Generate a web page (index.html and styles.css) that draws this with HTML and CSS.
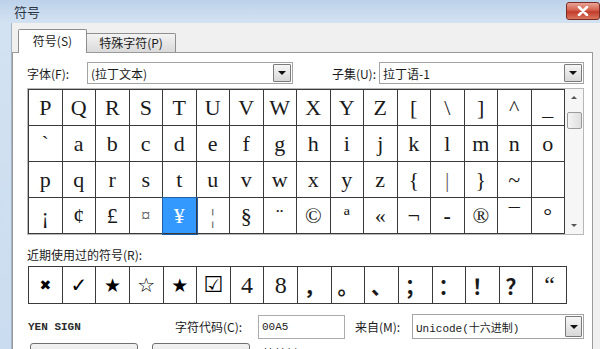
FILE: index.html
```html
<!DOCTYPE html>
<html>
<head>
<meta charset="utf-8">
<link rel="stylesheet" href="styles.css">
</head>
<body>
<div class="window">
  <div class="titlebar">
    <span class="title">符号</span>
    <span class="close"><svg width="12" height="10" viewBox="0 0 12 10"><path d="M2 1 L10 9 M10 1 L2 9" stroke="#fff" stroke-width="2.6" stroke-linecap="round"/></svg></span>
  </div>
  <div class="body">
    <div class="tabs">
      <div class="tab active">符号(S)</div>
      <div class="tab">特殊字符(P)</div>
    </div>
    <div class="panel">
      <div class="select-row">
        <span class="lbl lbl-font">字体(F):</span>
        <div class="select sel-font"><span>(拉丁文本)</span><span class="dd"><i class="tri"></i></span></div>
        <span class="lbl lbl-subset">子集(U):</span>
        <div class="select sel-subset"><span>拉丁语-1</span><span class="dd"><i class="tri"></i></span></div>
      </div>
      <div class="grid-wrap">
        <div class="grid">
          <span>P</span><span>Q</span><span>R</span><span>S</span><span>T</span><span>U</span><span>V</span><span>W</span><span>X</span><span>Y</span><span>Z</span><span>[</span><span>\</span><span>]</span><span>^</span><span>_</span>
          <span>`</span><span>a</span><span>b</span><span>c</span><span>d</span><span>e</span><span>f</span><span>g</span><span>h</span><span>i</span><span>j</span><span>k</span><span>l</span><span>m</span><span>n</span><span>o</span>
          <span>p</span><span>q</span><span>r</span><span>s</span><span>t</span><span>u</span><span>v</span><span>w</span><span>x</span><span>y</span><span>z</span><span>{</span><span class="gray">|</span><span>}</span><span>~</span><span></span>
          <span>¡</span><span>¢</span><span>£</span><span class="small">¤</span><span class="sel">¥</span><span class="gray">¦</span><span>§</span><span>¨</span><span>©</span><span>ª</span><span>«</span><span>¬</span><span class="bold">-</span><span>®</span><span>¯</span><span>°</span>
        </div>
        <div class="scrollbar">
          <div class="sb-btn"><i class="tri-up"></i></div>
          <div class="sb-track"><div class="thumb"></div></div>
          <div class="sb-btn"><i class="tri-down"></i></div>
        </div>
      </div>
      <div class="recent-label">近期使用过的符号(R):</div>
      <div class="recent">
        <span class="sym x">✖</span><span class="sym check">✓</span><span class="sym star">★</span><span class="sym star thin">☆</span><span class="sym star">★</span><span class="sym box">☑</span><span>4</span><span>8</span>
        <span class="cjk">，</span><span class="cjk">。</span><span class="cjk">、</span><span class="cjk">；</span><span class="cjk">：</span><span class="cjk">！</span><span class="cjk">？</span><span class="cjk quote">“</span>
      </div>
      <div class="info-row">
        <span class="name">YEN SIGN</span>
        <span class="lbl lbl-code">字符代码(C):</span>
        <div class="input">00A5</div>
        <span class="lbl lbl-from">来自(M):</span>
        <div class="select sel-from"><span class="mono">Unicode(十六进制)</span><span class="dd"><i class="tri"></i></span></div>
      </div>
      <div class="btn-row">
        <div class="btn btn1">自动更正(A)...</div>
        <div class="btn btn2">快捷键(K)...</div>
        <span class="lbl shortcut">快捷键: Alt+0165</span>
      </div>
    </div>
  </div>
</div>
</body>
</html>
```
FILE: styles.css
```css
* { box-sizing: border-box; }
html, body { margin: 0; padding: 0; }
body {
  width: 600px;
  height: 349px;
  overflow: hidden;
  font-family: "Noto Sans CJK SC", sans-serif;
  font-size: 12px;
  color: #1b1b1b;
}
.window {
  width: 600px;
  height: 349px;
  display: flex;
  flex-direction: column;
  overflow: hidden;
  background: linear-gradient(to bottom, #bcd2ea 0, #d3e2f2 23px, #cadcef 100%);
}
.titlebar {
  height: 23px;
  flex: none;
  display: flex;
  align-items: flex-start;
  justify-content: space-between;
  padding-left: 14px;
}
.title {
  font-size: 13px;
  line-height: 23px;
  color: #2a3442;
}
.close {
  width: 34px;
  height: 18px;
  margin-top: 2px;
  border: 1px solid #7a2c23;
  border-radius: 3px;
  background: linear-gradient(to bottom, #e9a596 0, #d4604c 45%, #c23c2c 55%, #d9765e 100%);
  display: flex;
  align-items: center;
  justify-content: center;
}
.body {
  flex: 1;
  margin-left: 11px;
  border-left: 1px solid #a3b4c6;
  background: #f0f0f0;
  padding: 6px 7px 0 0;
  display: flex;
  flex-direction: column;
}
.tabs {
  display: flex;
  align-items: flex-end;
  padding-left: 6px;
  height: 23px;
  flex: none;
}
.tab {
  height: 19px;
  width: 89px;
  border: 1px solid #8e8e8e;
  border-bottom: none;
  border-left: none;
  background: linear-gradient(to bottom, #f3f3f3, #dadada);
  line-height: 17px;
  text-align: center;
  border-radius: 0 2px 0 0;
}
.tab.active {
  width: 69px;
  height: 24px;
  margin-bottom: -1px;
  border-left: 1px solid #8e8e8e;
  background: #fff;
  position: relative;
  z-index: 1;
  line-height: 22px;
  border-radius: 2px 2px 0 0;
}
.panel {
  flex: 1;
  background: #fff;
  border: 1px solid #9a9a9a;
  padding: 9px 8px 0 14px;
}
.select-row {
  display: flex;
  align-items: center;
  height: 22px;
}
.lbl { white-space: nowrap; }
.lbl-font { width: 60px; }
.lbl-subset { width: 86px; text-align: right; padding-right: 3px; }
.select {
  height: 22px;
  border: 1px solid #a4a4a4;
  background: #fff;
  display: flex;
  align-items: center;
  justify-content: space-between;
  padding-left: 3px;
  padding-right: 1px;
}
.sel-font { width: 206px; }
.sel-subset { width: 205px; }
.dd {
  width: 18px;
  height: 18px;
  border: 1px solid #7b7b7b;
  border-radius: 1px;
  background: linear-gradient(to bottom, #f6f6f6, #d8d8d8);
  display: flex;
  align-items: center;
  justify-content: center;
}
.tri {
  width: 0;
  height: 0;
  border-left: 4px solid transparent;
  border-right: 4px solid transparent;
  border-top: 4px solid #111;
}
.grid-wrap {
  margin-top: 4px;
  width: 557px;
  border: 1px solid #b8b8b8;
  display: flex;
}
.grid {
  width: 537px;
  display: grid;
  grid-template-columns: repeat(16, 1fr);
  grid-template-rows: repeat(4, 36px);
  border-top: 1px solid #3a3a3a;
  border-left: 1px solid #3a3a3a;
  font-family: "Liberation Serif", "DejaVu Serif", serif;
  font-size: 22px;
  color: #1a1a1a;
}
.grid span, .recent span {
  border-right: 1px solid #3a3a3a;
  border-bottom: 1px solid #3a3a3a;
  display: flex;
  align-items: center;
  justify-content: center;
  line-height: 1;
}
.grid span.sel {
  background: #3399ff;
  color: #fff;
  outline: 1px solid #1f5fa6;
}
.grid span.small { font-size: 18px; color: #555; }
.grid span.gray { color: #666; }
.grid span.bold { font-weight: bold; }
.scrollbar {
  width: 18px;
  display: flex;
  flex-direction: column;
  background: #f6f6f6;
}
.sb-btn {
  height: 17px;
  display: flex;
  align-items: center;
  justify-content: center;
}
.tri-up {
  width: 0; height: 0;
  border-left: 3px solid transparent;
  border-right: 3px solid transparent;
  border-bottom: 3px solid #555;
}
.tri-down {
  width: 0; height: 0;
  border-left: 3px solid transparent;
  border-right: 3px solid transparent;
  border-top: 3px solid #555;
}
.sb-track { flex: 1; padding: 6px 1px 0 2px; }
.thumb {
  height: 17px;
  border: 1px solid #9b9b9b;
  border-radius: 2px;
  background: linear-gradient(to right, #f4f4f4, #dedede);
}
.recent-label {
  margin-top: 12px;
  line-height: 15px;
  height: 15px;
}
.recent {
  margin-top: 4px;
  margin-left: 1px;
  width: 539px;
  display: grid;
  grid-template-columns: repeat(16, 1fr);
  grid-template-rows: 37px;
  border-top: 1px solid #3a3a3a;
  border-left: 1px solid #3a3a3a;
  font-family: "Liberation Serif", "DejaVu Serif", serif;
  font-size: 24px;
  color: #1a1a1a;
}
.recent .sym { font-family: "DejaVu Sans", sans-serif; color: #000; }
.recent .x { font-size: 14px; }
.recent .check { font-size: 20px; }
.recent .star { font-size: 19px; }
.recent .thin { font-size: 20px; font-weight: bold; }
.recent .box { font-size: 22px; }
.recent .cjk { font-family: "Noto Sans CJK SC", sans-serif; font-size: 21px; font-weight: bold; }
.recent .quote { font-family: "Liberation Serif", serif; font-size: 24px; font-weight: normal; align-items: flex-start; padding-top: 6px; }
.info-row {
  margin-top: 10px;
  display: flex;
  align-items: center;
  height: 25px;
}
.name {
  width: 147px;
  margin-left: 1px;
  font-family: "Liberation Mono", monospace;
  font-size: 11px;
  font-weight: bold;
  color: #2a2a2a;
}
.lbl-code { width: 83px; }
.input {
  width: 87px;
  height: 24px;
  border: 1px solid #ababab;
  background: #fff;
  font-family: "Liberation Mono", monospace;
  font-size: 11px;
  line-height: 22px;
  padding-left: 3px;
}
.lbl-from { margin-left: 10px; width: 57px; }
.sel-from { width: 172px; height: 25px; }
.sel-from .dd { height: 21px; width: 17px; }
.mono { font-family: "Liberation Mono", "Noto Sans CJK SC", monospace; font-size: 11px; }
.btn-row {
  margin-top: 4px;
  display: flex;
  align-items: flex-start;
}
.btn {
  height: 23px;
  border: 1px solid #707070;
  border-radius: 3px;
  background: linear-gradient(to bottom, #f2f2f2, #dcdcdc);
  text-align: center;
  line-height: 21px;
}
.btn1 { margin-left: 3px; width: 108px; }
.btn2 { margin-left: 14px; width: 98px; }
.shortcut { margin-left: 13px; line-height: 21px; }
```
